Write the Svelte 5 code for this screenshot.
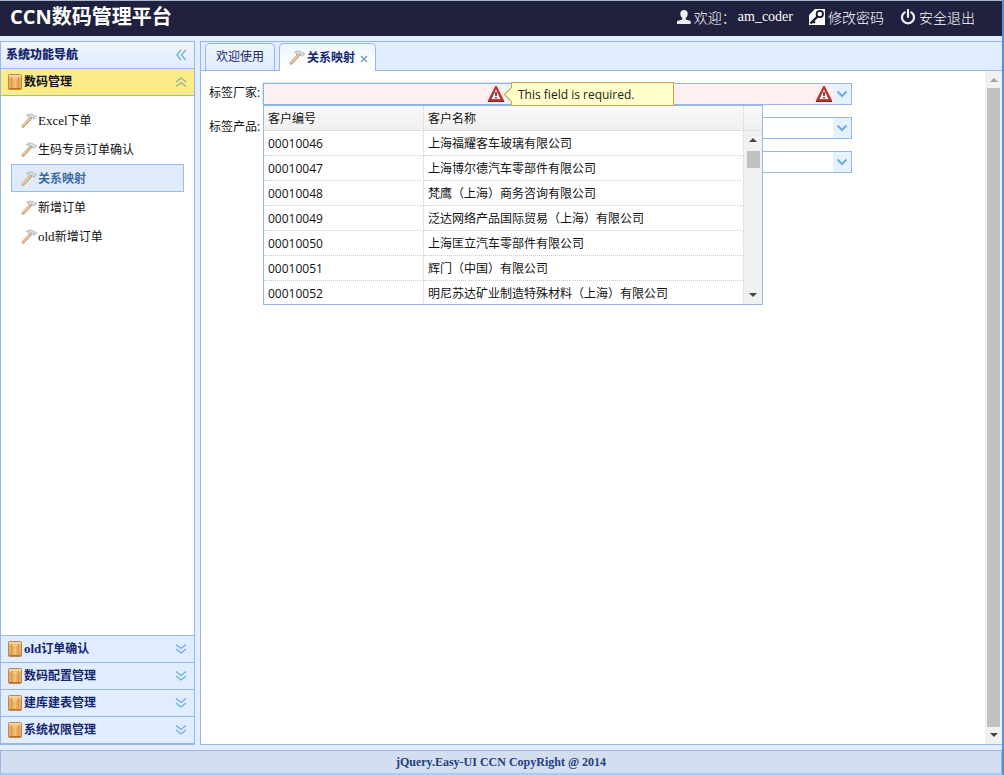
<script>
  const menu = [
    { latin: 'Excel', text: '下单' },
    { latin: '', text: '生码专员订单确认' },
    { latin: '', text: '关系映射', active: true },
    { latin: '', text: '新增订单' },
    { latin: 'old', text: '新增订单' }
  ];
  const sections = [
    { latin: 'old', text: '订单确认' },
    { latin: '', text: '数码配置管理' },
    { latin: '', text: '建库建表管理' },
    { latin: '', text: '系统权限管理' }
  ];
  const customers = [
    ['00010046', '上海福耀客车玻璃有限公司'],
    ['00010047', '上海博尔德汽车零部件有限公司'],
    ['00010048', '梵鹰（上海）商务咨询有限公司'],
    ['00010049', '泛达网络产品国际贸易（上海）有限公司'],
    ['00010050', '上海匡立汽车零部件有限公司'],
    ['00010051', '辉门（中国）有限公司'],
    ['00010052', '明尼苏达矿业制造特殊材料（上海）有限公司']
  ];
  const rightFields = ['标签型号', '标签规格', '标签类型'];
</script>

{#snippet hammer()}
  <svg class="icon" viewBox="0 0 16 16" width="16" height="16" aria-hidden="true">
    <path d="M2 13.200 9.500 5.200" stroke="#b98a5c" stroke-width="2.800" stroke-linecap="round" />
    <path d="M2 12.900 9.300 5.200" stroke="#f3d3a2" stroke-width="1.500" stroke-linecap="round" />
    <path d="M5.400 2.600C7.600.6 10.700.5 12.400 2.200l1.200.9 1.300-.3.700 1.200-2.200 2.100-1.500-.4-.2-1-1.500-1-1.700 1.400-1.400-1.300 1-.8c-.9-.5-1.700-.4-2.700-.4Z" fill="#dde0e0" stroke="#9aa1a2" stroke-width=".7" />
  </svg>
{/snippet}

{#snippet book()}
  <svg class="book" viewBox="0 0 14 16" width="14" height="16" aria-hidden="true">
    <rect x=".5" y=".5" width="13" height="15" rx="1" fill="#e9ae63" stroke="#bb8650" />
    <path d="M1 1h12v2.500H1z" fill="#f3d3a0" />
    <path d="M3.500 3v12M10.500 3v12" stroke="#d8933f" />
    <path d="M4.500 4.500h5M7 5v9" stroke="#f8cf8e" />
    <path d="M1 14.500h12" stroke="#b5752f" />
  </svg>
{/snippet}

{#snippet chevrons(turn)}
  <svg class="chev" viewBox="0 0 12 12" width="12" height="12" aria-hidden="true">
    <g transform="rotate({turn} 6 6)" fill="none" stroke="currentColor" stroke-width="1.300">
      <path d="m1 1.500 5 4 5-4M1 6l5 4 5-4" />
    </g>
  </svg>
{/snippet}

{#snippet warn()}
  <svg class="warn" viewBox="0 0 18 18" width="18" height="18" aria-hidden="true">
    <path d="M9 1.500 16.500 16H1.500Z" fill="#c9403f" stroke="#b02a2d" stroke-width="1.600" stroke-linejoin="round" />
    <path d="M1.500 16.500h15" stroke="#8e1f24" stroke-width="1.200" stroke-linecap="round" />
    <path d="M9 4.500 13.400 14H4.600Z" fill="#fbf1ec" />
    <path d="M9 7v4M9 12v1.500" stroke="#3a2a2a" stroke-width="1.500" />
  </svg>
{/snippet}

{#snippet arrow()}
  <svg viewBox="0 0 12 8" width="12" height="8" aria-hidden="true">
    <path d="m1.500 1.500 4.500 4.500 4.500-4.500" fill="none" stroke="#6aace6" stroke-width="2" />
  </svg>
{/snippet}

{#snippet scroller(cls, up)}
  <div class="scroller {cls}" aria-hidden="true">
    <svg viewBox="0 0 8 4" width="8" height="4"><path d="M0 4h8L4 0Z" fill={up} /></svg>
    <div class="thumb"></div>
    <svg viewBox="0 0 8 4" width="8" height="4"><path d="M0 0h8L4 4Z" fill="#454545" /></svg>
  </div>
{/snippet}

<div class="app">
  <header>
    <h1>CCN数码管理平台</h1>
    <nav>
      <span class="user">
        <svg viewBox="0 0 16 16" width="16" height="16" aria-hidden="true"><path fill="#eee" d="M8 1c2.400 0 3.700 1.600 3.700 3.800 0 1.900-.8 3.400-2 4.200v1.500l5 1.500V15H1v-3l5.300-1.500V9c-1.200-.8-2-2.300-2-4.200C4.300 2.600 5.600 1 8 1Z" /></svg>
        欢迎：<span class="latin">am_coder</span>
      </span>
      <a href="#password">
        <svg viewBox="0 0 16 16" width="16" height="16" aria-hidden="true"><path fill="#fff" d="M0 0h16v16H0z" /><circle cx="10.800" cy="5" r="3.200" fill="none" stroke="#16162a" stroke-width="1.800" /><path d="m8.500 7.500-7 7M3.800 12l2 2" stroke="#16162a" stroke-width="2.400" /><path d="M0 0h6L0 6Z" fill="#22223f" /></svg>
        修改密码
      </a>
      <a href="#logout">
        <svg viewBox="0 0 16 16" width="16" height="16" aria-hidden="true"><path d="M4.600 3.400a6 6 0 1 0 6.800 0M8 1v7" fill="none" stroke="#eee" stroke-width="2.200" stroke-linecap="round" /></svg>
        安全退出
      </a>
    </nav>
  </header>

  <div class="work">
    <aside>
      <div class="bar title"><strong>系统功能导航</strong>{@render chevrons(90)}</div>
      <button class="bar open">{@render book()}<span>数码管理</span>{@render chevrons(180)}</button>
      <ul>
        {#each menu as m}
          <li><a href="#menu" class:active={m.active}>{@render hammer()}<span>{#if m.latin}<span class="latin">{m.latin}</span>{/if}{m.text}</span></a></li>
        {/each}
      </ul>
      {#each sections as s}
        <button class="bar">{@render book()}<span>{#if s.latin}<span class="latin">{s.latin}</span>{/if}{s.text}</span>{@render chevrons(0)}</button>
      {/each}
    </aside>

    <main>
      <div class="tabs">
        <button class="tab">欢迎使用</button>
        <button class="tab current">{@render hammer()}<span>关系映射</span>
          <svg class="close" viewBox="0 0 8 8" width="8" height="8" aria-hidden="true"><path d="m1 1 6 6m0-6-6 6" stroke="#6f96bd" stroke-width="1.300" /></svg>
        </button>
      </div>
      <div class="body">
        <form>
          <div class="labels">
            <label for="maker">标签厂家:</label>
            <label for="product">标签产品:</label>
          </div>
          <div class="fields">
            <div class="combo invalid focus">
              <input id="maker" type="text" />{@render warn()}
              <button type="button" aria-label="展开">{@render arrow()}</button>
              <div class="tip" role="tooltip">This field is required.</div>
              <div class="popup">
                <div class="grid">
                  <table>
                    <thead><tr><th>客户编号</th><th>客户名称</th></tr></thead>
                    <tbody>
                      {#each customers as [id, name]}
                        <tr><td>{id}</td><td>{name}</td></tr>
                      {/each}
                    </tbody>
                  </table>
                </div>
                <div class="side"><div class="cap"></div>{@render scroller('small', '#454545')}</div>
              </div>
            </div>
            <div class="combo">
              <input id="product" type="text" />
              <button type="button" aria-label="展开">{@render arrow()}</button>
            </div>
          </div>
          <div class="fields">
            {#each rightFields as f, i}
              <div class="combo" class:invalid={i === 0}>
                <input type="text" aria-label={f} />{#if i === 0}{@render warn()}{/if}
                <button type="button" aria-label="展开">{@render arrow()}</button>
              </div>
            {/each}
          </div>
        </form>
        {@render scroller('page', '#a0a0a0')}
      </div>
    </main>
  </div>

  <footer>jQuery.Easy-UI CCN CopyRight @ 2014</footer>
</div>

<style>
  :global(body) { margin: 0; }
  * { box-sizing: border-box; }
  .app {
    height: 100vh;
    display: flex;
    flex-direction: column;
    background: #e2edfd;
    border-right: 2px solid #4b94dc;
    font: 12px/16px "Open Sans", "Noto Sans CJK SC", sans-serif;
    color: #111;
  }
  button, input { font: inherit; color: inherit; margin: 0; padding: 0; border: 0; background: none; }
  svg { flex: none; display: block; }
  a { color: inherit; text-decoration: none; }
  .latin { font-family: "Liberation Serif", serif; font-size: 13px; }

  header {
    height: 36px;
    flex: none;
    display: flex;
    align-items: center;
    justify-content: space-between;
    padding: 0 27px 4px 10px;
    background: #20213f;
    border-top: 1px solid #a9b7ca;
    color: #fff;
  }
  h1 { margin: 0; font: bold 20px/24px "Open Sans", "Noto Sans CJK SC", sans-serif; }
  nav { display: flex; gap: 16px; font-size: 14px; font-family: "Noto Sans CJK SC", sans-serif; font-weight: 300; }
  nav a, .user { display: flex; align-items: center; gap: 3px; line-height: 20px; }
  .user { gap: 2px; }
  .user .latin { font-size: 14px; font-weight: 400; }

  .work { flex: 1; min-height: 0; display: flex; gap: 5px; padding: 5px 0; }
  aside { width: 195px; flex: none; display: flex; flex-direction: column; background: #fff; border: 1px solid #95b8e7; }
  .bar {
    height: 27px;
    flex: none;
    display: flex;
    align-items: center;
    gap: 2px;
    padding: 0 7px;
    background: #e0ecff;
    border-top: 1px solid #95b8e7;
    font-weight: bold;
    color: #15266d;
    text-align: left;
  }
  .title { height: 26px; padding-left: 5px; border-top: 0; background: linear-gradient(#f0f5ff, #e0ecff); }
  .open { background: #fbec88; color: #111; border-bottom: 1px solid #95b8e7; height: 28px; }
  .bar:last-child { height: 28px; border-bottom: 1px solid #95b8e7; }
  .chev { margin-left: auto; color: #68acdf; }
  .open .chev { color: #91b095; }
  ul { list-style: none; flex: 1; margin: 0; padding: 10px; display: flex; flex-direction: column; gap: 1px; }
  li a { height: 28px; display: flex; align-items: center; gap: 1px; padding: 2px 9px 0; border: 1px solid transparent; }
  li a.active { background: #dfeafb; border-color: #99bce8; font-weight: bold; color: #416aa3; }

  main { flex: 1; min-width: 0; display: flex; flex-direction: column; background: #fff; border: 1px solid #95b8e7; border-right: 0; }
  .tabs { height: 29px; flex: none; display: flex; align-items: flex-end; gap: 4px; padding-left: 4px; background: #e0ecff; border-bottom: 1px solid #95b8e7; }
  .tab { height: 27px; padding: 0 10px; border: 1px solid #95b8e7; border-bottom: 0; border-radius: 5px 5px 0 0; background: linear-gradient(#eff5ff, #e0ecff); color: #15266d; display: flex; align-items: center; }
  .current { height: 28px; margin-bottom: -1px; padding: 0 7px 0 9px; background: linear-gradient(#eff5ff, #fff); font-weight: bold; gap: 2px; }
  .close { margin: 2px 0 0 3px; }
  .body { flex: 1; min-height: 0; display: flex; justify-content: space-between; }

  form { display: flex; padding: 12px 0 0 8px; }
  .labels { width: 54px; display: flex; flex-direction: column; gap: 12px; }
  .labels label { height: 22px; line-height: 20px; }
  .fields { width: 261px; display: flex; flex-direction: column; gap: 12px; }
  .fields + .fields { width: 263px; margin-left: 65px; }
  .combo { position: relative; height: 22px; display: flex; align-items: center; border: 1px solid #95b8e7; background: #fff; }
  .focus { border-color: #86b3e8; box-shadow: 0 0 2px #95b8e7; }
  .invalid { background: #fff0f0; }
  .combo input { flex: 1; min-width: 0; height: 20px; padding: 0 4px; outline: none; }
  .combo > button { width: 18px; height: 20px; display: grid; place-items: center; background: #e6f1fe; }
  .tip {
    position: absolute; z-index: 3; left: 247px; top: -2px; width: 163px; height: 24px;
    padding: 0 6px; line-height: 24px; border: 1px solid #c7a24b; background: #ffffc9; color: #222;
  }
  .tip::before { content: ""; position: absolute; left: -6px; top: 6px; width: 10px; height: 10px; background: #ffffc9; border: solid #c7a24b; border-width: 0 0 1px 1px; transform: rotate(45deg); }
  .popup { position: absolute; z-index: 2; left: -1px; top: 21px; width: 500px; height: 200px; display: flex; overflow: hidden; background: #fff; border: 1px solid #95b8e7; }
  .grid { flex: 1; overflow: hidden; }
  table { width: 100%; table-layout: fixed; border-collapse: separate; border-spacing: 0; }
  th, td { height: 25px; padding: 2px 4px 0; text-align: left; font-weight: normal; white-space: nowrap; border-right: 1px dotted #ccc; border-bottom: 1px dotted #ccc; }
  th { background: linear-gradient(#f9f9f9, #efefef); border-bottom: 1px solid #ddd; }
  th:first-child { width: 160px; }
  .side { width: 18px; display: flex; flex-direction: column; }
  .cap { height: 25px; flex: none; background: linear-gradient(#f9f9f9, #efefef); border-bottom: 1px solid #ddd; }
  .scroller { display: flex; flex-direction: column; align-items: center; background: #f1f1f1; }
  .thumb { background: #c1c1c1; width: 13px; }
  .small { flex: 1; padding: 7px 0; gap: 9px; }
  .small .thumb { height: 17px; margin-bottom: auto; }
  .page { width: 17px; padding: 7px 0; gap: 6px; }
  .page .thumb { flex: 1; }

  footer {
    height: 25px;
    flex: none;
    background: #d3dff0;
    border: 1px solid #95b8e7;
    border-bottom: 2px solid #a3cdf5;
    text-align: center;
    font: bold 12px/23px "Liberation Serif", serif;
    color: #24407e;
  }
</style>
